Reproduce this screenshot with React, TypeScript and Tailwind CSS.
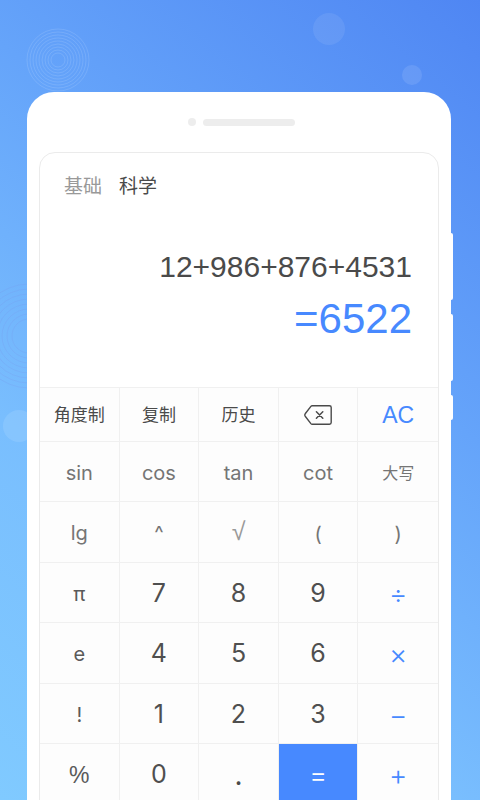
import { useState } from "react";
import clsx from "clsx";

type Key = {
  label: string;
  style: string;
  icon?: boolean;
};

const tool = "text-[17px] text-[#4a4a4a] pt-0.5";
const fn = "text-xl text-[#757575] pt-0.5";
const constant = "text-xl text-[#5a5a5a] pt-0.5";
const digit = "text-[25px] text-[#4f4f4f] pt-0.5";
const operator = "text-[28px] font-light text-[#4789ff] pt-0.5";

const keys: Key[] = [
  { label: "角度制", style: tool },
  { label: "复制", style: tool },
  { label: "历史", style: tool },
  { label: "删除", style: "", icon: true },
  { label: "AC", style: "font-['Liberation_Sans',Arial,sans-serif] text-[23px] text-[#4789ff] pt-0.5" },

  { label: "sin", style: fn },
  { label: "cos", style: fn },
  { label: "tan", style: fn },
  { label: "cot", style: fn },
  { label: "大写", style: "text-base text-[#757575] pt-0.5" },

  { label: "lg", style: fn },
  { label: "^", style: fn },
  { label: "√", style: "font-['Liberation_Sans',Arial,sans-serif] text-[25px] text-[#999999]" },
  { label: "(", style: "text-xl text-[#757575] pt-1" },
  { label: ")", style: "text-xl text-[#757575] pt-1" },

  { label: "π", style: constant },
  { label: "7", style: digit },
  { label: "8", style: digit },
  { label: "9", style: digit },
  { label: "÷", style: operator },

  { label: "e", style: constant },
  { label: "4", style: digit },
  { label: "5", style: digit },
  { label: "6", style: digit },
  { label: "×", style: operator },

  { label: "!", style: constant },
  { label: "1", style: digit },
  { label: "2", style: digit },
  { label: "3", style: digit },
  { label: "−", style: operator },

  { label: "%", style: "font-['Liberation_Sans',Arial,sans-serif] text-[23px] text-[#5a5a5a] pt-0.5" },
  { label: "0", style: digit },
  { label: ".", style: "text-[28px] text-[#4a4a4a] pt-0.5" },
  { label: "=", style: "text-[28px] font-light text-white bg-[#4789ff] pt-0.5" },
  { label: "+", style: operator },
];

function DeleteIcon() {
  return (
    <svg viewBox="0 0 28 20" className="w-7 h-5" fill="none" stroke="#4a4a4a" strokeLinejoin="round" strokeLinecap="round">
      <path d="M8.2 .8H25.4Q27.2 .8 27.2 2.4V17.6Q27.2 19.2 25.4 19.2H8.2Q7.4 19.2 6.9 18.6L1.2 11.2Q.4 10 1.2 8.8L6.9 1.4Q7.4 .8 8.2 .8Z" strokeWidth="1.4" />
      <path d="M12.4 6.8L18.8 13.2M18.8 6.8L12.4 13.2" strokeWidth="1.5" />
    </svg>
  );
}

function Rings({ radii, color, className }: { radii: number[]; color: string; className: string }) {
  return (
    <svg viewBox="-55 -55 110 110" className={className} fill="none" stroke={color}>
      {radii.map((r) => (
        <circle key={r} r={r} />
      ))}
    </svg>
  );
}

function Backdrop() {
  return (
    <div aria-hidden="true">
      <Rings
        radii={[7, 10, 13, 16, 19, 22, 25, 28, 31]}
        color="rgba(255,255,255,0.12)"
        className="absolute left-[3px] top-[5px] size-[110px]"
      />
      <Rings
        radii={[17, 22, 27, 32, 37, 42, 47, 52]}
        color="rgba(120,150,235,0.25)"
        className="absolute -left-[26px] top-[281px] size-[110px]"
      />
      <div className="absolute left-[313px] top-[13px] size-8 rounded-full bg-white/8" />
      <div className="absolute left-[402px] top-[65px] size-5 rounded-full bg-white/10" />
      <div className="absolute left-[3px] top-[410px] size-8 rounded-full bg-white/10" />
    </div>
  );
}

function SideButtons() {
  return (
    <div aria-hidden="true" className="absolute left-full top-[141px] flex flex-col gap-3.5">
      <div className="w-[2px] h-[67px] bg-white rounded-r-sm" />
      <div className="w-[2px] h-[67px] bg-white rounded-r-sm" />
      <div className="w-[2px] h-[25px] bg-white rounded-r-sm" />
    </div>
  );
}

function App() {
  const [mode, setMode] = useState("科学");

  return (
    <div className="relative h-screen overflow-hidden bg-[linear-gradient(40deg,#80caff_0%,#79befe_32%,#65a4fa_63%,#4f86f3_100%)] pt-[92px] pl-[27px] pr-[29px] font-[Inter,'Noto_Sans_CJK_SC',sans-serif]">
      <Backdrop />
      <main className="relative bg-white rounded-t-[27px] px-3 pb-16">
        <SideButtons />
        <div className="flex h-[60px] items-center justify-center gap-[7px] pl-1">
          <span className="size-2 rounded-full bg-[#ededed]" />
          <span className="h-[7px] w-[92px] rounded-full bg-[#ededed]" />
        </div>

        <div className="overflow-hidden rounded-t-2xl border border-[#ebebeb]">
          <div className="flex gap-[17px] px-6 pt-5 text-[19px] leading-7">
            {["基础", "科学"].map((name) => (
              <button
                key={name}
                onClick={() => setMode(name)}
                className={mode === name ? "text-[#4a4a4a]" : "text-[#999999]"}
              >
                {name}
              </button>
            ))}
          </div>

          <div className="px-[26px] pt-12 pb-11 text-right font-['Liberation_Sans',Arial,sans-serif]">
            <p className="text-[30px] leading-9 text-[#4a4a4a]">12+986+876+4531</p>
            <p className="pt-2.5 text-[42px] leading-12 text-[#4789ff]">=6522</p>
          </div>

          <div className="grid grid-cols-5 grid-rows-[54px_60px_61px_60px_61px_60px_61px] bg-[#fdfdfd]">
            {keys.map((key) => (
              <button
                key={key.label}
                aria-label={key.icon ? key.label : undefined}
                className={clsx(
                  "flex items-center justify-center border-t border-[#f0f0f0] not-nth-[5n]:border-r",
                  key.style,
                )}
              >
                {key.icon ? <DeleteIcon /> : key.label}
              </button>
            ))}
          </div>
        </div>
      </main>
    </div>
  );
}

export default App;
